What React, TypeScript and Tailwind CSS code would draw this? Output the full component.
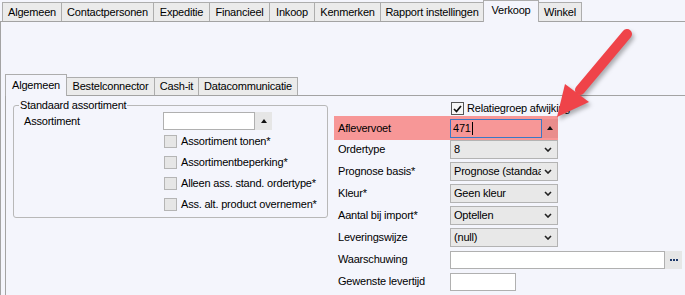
const topTabs: [string, number][] = [
  ["Algemeen", 60],
  ["Contactpersonen", 93],
  ["Expeditie", 57],
  ["Financieel", 61],
  ["Inkoop", 46],
  ["Kenmerken", 67],
  ["Rapport instellingen", 104],
  ["Verkoop", 56],
  ["Winkel", 44],
];

const innerTabs: [string, number][] = [
  ["Algemeen", 62],
  ["Bestelconnector", 89],
  ["Cash-it", 45],
  ["Datacommunicatie", 100],
];

const checks = [
  "Assortiment tonen*",
  "Assortimentbeperking*",
  "Alleen ass. stand. ordertype*",
  "Ass. alt. product overnemen*",
];

const selects: [string, string][] = [
  ["Ordertype", "8"],
  ["Prognose basis*", "Prognose (standaard)"],
  ["Kleur*", "Geen kleur"],
  ["Aantal bij import*", "Optellen"],
  ["Leveringswijze", "(null)"],
];

function Chevron() {
  return (
    <svg width="8" height="5" viewBox="0 0 8 5" className="shrink-0">
      <path d="M1 1 L4 4 L7 1" fill="none" stroke="#222" strokeWidth="1.6" />
    </svg>
  );
}

function UpArrow() {
  return (
    <svg width="6" height="4" viewBox="0 0 6 4">
      <path d="M0 4 L3 0 L6 4 Z" fill="#111" />
    </svg>
  );
}

function Select({ value }: { value: string }) {
  return (
    <div className="flex h-[19px] w-[108px] items-center border border-[#b3b3b3] bg-[#e8e8e8] pl-[3px] pr-[4px]">
      <span className="flex-1 overflow-hidden whitespace-nowrap">{value}</span>
      <span className="ml-[2px] flex w-[10px] justify-center">
        <Chevron />
      </span>
    </div>
  );
}

export default function App() {
  return (
    <div className="relative h-[295px] w-[685px] overflow-hidden bg-[#f4f5fc] text-[11px] leading-[13px] tracking-[-0.2px] text-black [font-family:'Liberation_Sans',Arial,sans-serif]">
      {/* top tab strip */}
      <div className="flex h-[21px] items-start pl-[2px]">
        {topTabs.map(([t, w]) =>
          t === "Verkoop" ? (
            <div
              key={t}
              style={{ width: w }}
              className="relative z-10 -ml-px flex h-[22px] items-center justify-center border border-b-0 border-[#adadad] bg-[#f4f5fc] pb-[2px]"
            >
              {t}
            </div>
          ) : (
            <div
              key={t}
              style={{ width: w }}
              className="-ml-px mt-[2px] flex h-[19px] items-center justify-center border border-b-0 border-[#adadad] bg-[#ebebeb] first:ml-0"
            >
              {t}
            </div>
          )
        )}
      </div>

      {/* content */}
      <div className="h-[274px] border-l border-t border-[#a3a3a3] pl-[4px] pt-[52px]">
        {/* inner tabs */}
        <div className="flex h-[21px] items-start">
          {innerTabs.map(([t, w], i) =>
            i === 0 ? (
              <div
                key={t}
                style={{ width: w }}
                className="relative z-10 flex h-[22px] items-center justify-center border border-b-0 border-[#adadad] bg-[#f4f5fc] pb-[1px]"
              >
                {t}
              </div>
            ) : (
              <div
                key={t}
                style={{ width: w }}
                className="-ml-px mt-[3px] flex h-[18px] items-center justify-center border border-b-0 border-[#adadad] bg-[#ebebeb]"
              >
                {t}
              </div>
            )
          )}
        </div>

        {/* inner panel */}
        <div className="flex h-[200px] border-l border-t border-[#a3a3a3]">
          {/* left group */}
          <fieldset className="ml-[7px] mt-[3px] w-[315px] self-start rounded-[3px] border border-[#b8b8b8] pb-[2px]">
            <legend className="ml-[5px] px-[1px] leading-[13px]">Standaard assortiment</legend>
            <div className="flex h-[18px] items-center">
              <span className="w-[149px] pl-[10px]">Assortiment</span>
              <div className="h-[18px] w-[92px] border border-[#b0b0b0] bg-white" />
              <div className="flex h-[18px] w-[17px] items-center justify-center bg-[#e6e6e6]">
                <UpArrow />
              </div>
            </div>
            <div className="mt-[1px]">
              {checks.map((c) => (
                <div key={c} className="flex h-[21px] items-center pl-[150px]">
                  <div className="h-[13px] w-[13px] border border-[#b5b5b5] bg-[#e6e6e6]" />
                  <span className="ml-[4px]">{c}</span>
                </div>
              ))}
            </div>
          </fieldset>

          {/* right column */}
          <div className="ml-[6px] pt-[4px]">
            <div className="flex h-[16px] items-start pl-[117px] pt-[2px]">
              <div className="flex h-[13px] w-[13px] items-center justify-center border border-[#555] bg-[#f7f7f7]">
                <svg width="9" height="8" viewBox="0 0 9 8">
                  <path d="M1 4 L3.5 6.5 L8 1" fill="none" stroke="#111" strokeWidth="1.7" />
                </svg>
              </div>
              <span className="ml-[3px]">Relatiegroep afwijking</span>
            </div>

            <div className="flex h-[24px] w-[224px] items-center bg-[#f79797]">
              <span className="w-[116px] pl-[4px]">Aflevervoet</span>
              <div className="flex h-[19px] w-[92px] items-center border border-[#3b78c6] pl-[2px]">
                471<span className="ml-px h-[13px] w-px bg-black" />
              </div>
              <div className="flex h-[19px] w-[16px] items-center justify-center bg-[#e98d8d]">
                <UpArrow />
              </div>
            </div>

            {selects.map(([l, v]) => (
              <div key={l} className="mb-[3px] flex h-[19px] items-center">
                <span className="w-[116px] pl-[4px]">{l}</span>
                <Select value={v} />
              </div>
            ))}

            <div className="mb-[3px] flex h-[19px] items-center">
              <span className="w-[116px] pl-[4px]">Waarschuwing</span>
              <div className="h-[18px] w-[215px] border border-[#b0b0b0] bg-white" />
              <div className="flex h-[18px] w-[17px] items-center justify-center gap-[1px] bg-[#e6e6e6]">
                <span className="h-[2px] w-[2px] bg-[#1f3a6b]" />
                <span className="h-[2px] w-[2px] bg-[#1f3a6b]" />
                <span className="h-[2px] w-[2px] bg-[#1f3a6b]" />
              </div>
            </div>

            <div className="flex h-[19px] items-center">
              <span className="w-[116px] pl-[4px]">Gewenste levertijd</span>
              <div className="h-[18px] w-[66px] border border-[#b0b0b0] bg-white" />
            </div>
          </div>
        </div>
      </div>

      {/* annotation arrow */}
      <svg
        className="pointer-events-none absolute left-0 top-0 drop-shadow-[2px_3px_2px_rgba(0,0,0,0.3)]"
        width="685"
        height="295"
      >
        <line x1="627" y1="34" x2="580" y2="90" stroke="#ef4349" strokeWidth="10" strokeLinecap="round" />
        <path d="M557 117 L565 84 L589 102 Z" fill="#ef4349" />
      </svg>
    </div>
  );
}
